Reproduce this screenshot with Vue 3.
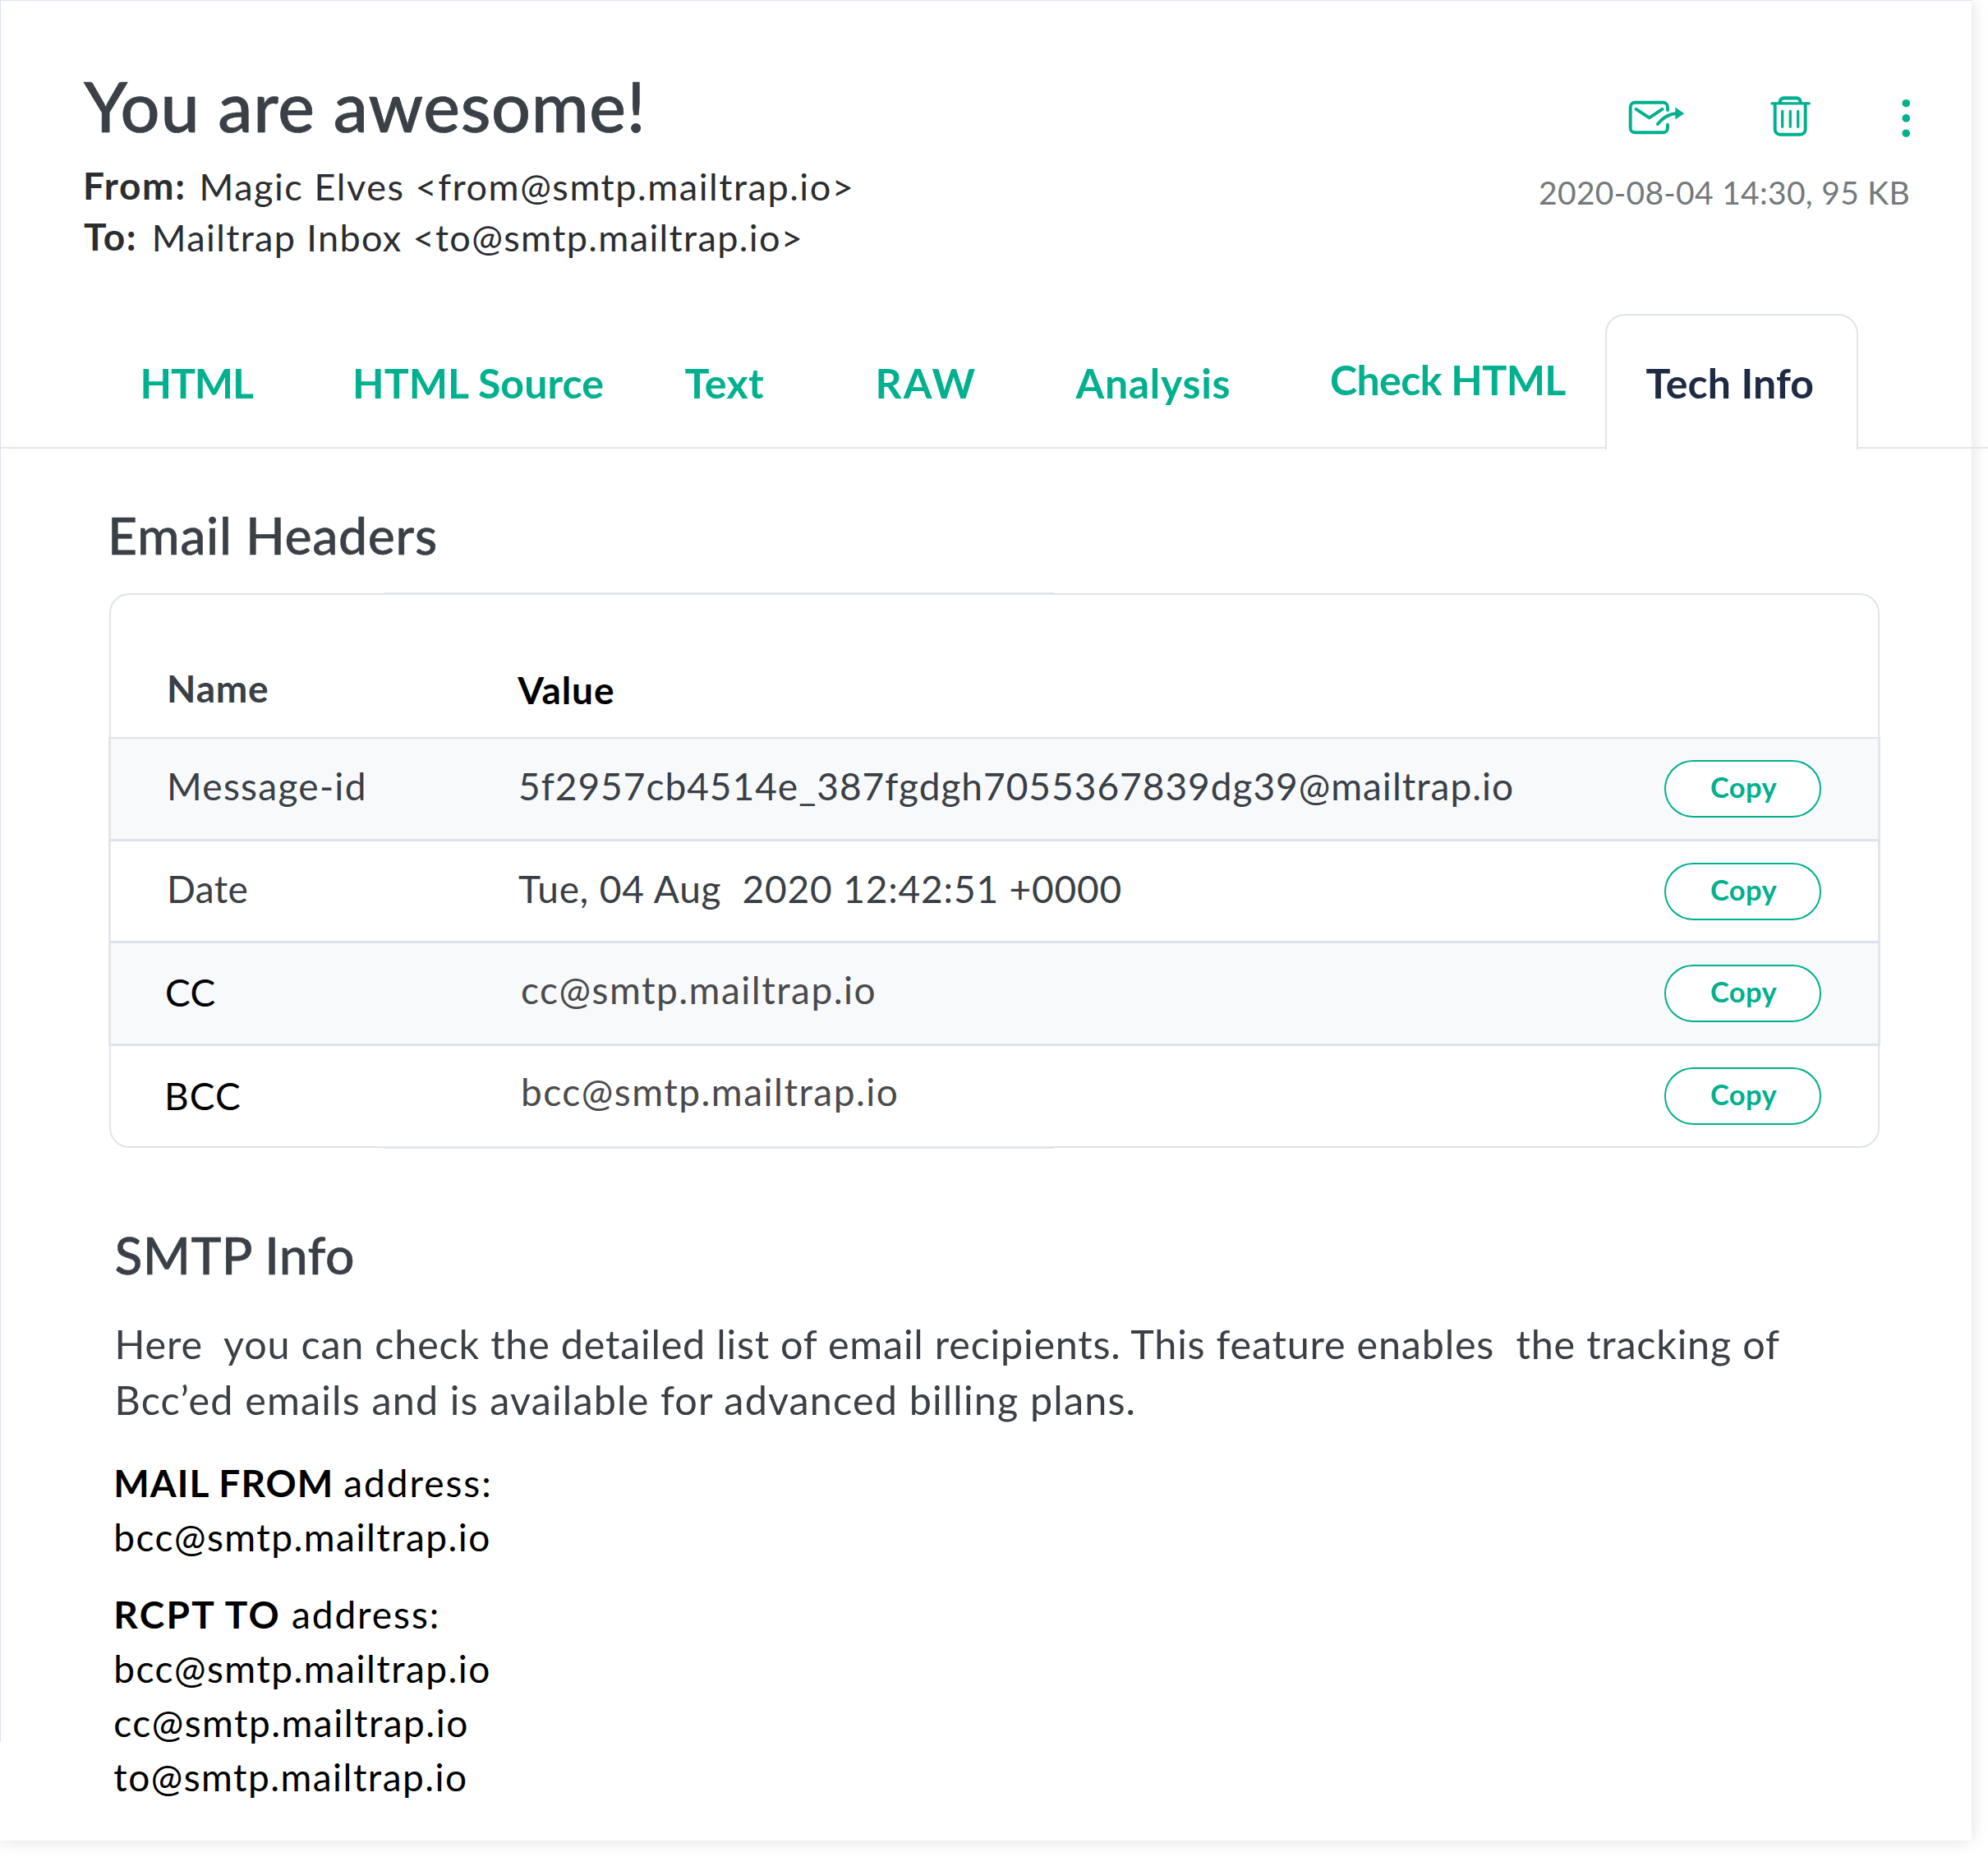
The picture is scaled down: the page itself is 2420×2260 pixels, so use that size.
<script setup>
const tabs = [
  { id: 'html', label: 'HTML' },
  { id: 'source', label: 'HTML Source' },
  { id: 'text', label: 'Text' },
  { id: 'raw', label: 'RAW' },
  { id: 'analysis', label: 'Analysis' },
  { id: 'check', label: 'Check HTML' },
  { id: 'tech', label: 'Tech Info' },
]

const headers = [
  { id: 'message', name: 'Message-id', value: '5f2957cb4514e_387fgdgh7055367839dg39@mailtrap.io' },
  { id: 'date', name: 'Date', value: 'Tue, 04 Aug  2020 12:42:51 +0000' },
  { id: 'cc', name: 'CC', value: 'cc@smtp.mailtrap.io' },
  { id: 'bcc', name: 'BCC', value: 'bcc@smtp.mailtrap.io' },
]

const about = [
  'Here  you can check the detailed list of email recipients. This feature enables  the tracking of',
  'Bcc’ed emails and is available for advanced billing plans.',
]
</script>

<template>
  <div class="page">
    <main class="panel">
      <header class="head">
        <div class="summary">
          <h1>You are awesome!</h1>
          <div class="party from"><b>From:</b><span>Magic Elves &lt;from@smtp.mailtrap.io&gt;</span></div>
          <div class="party to"><b>To:</b><span>Mailtrap Inbox &lt;to@smtp.mailtrap.io&gt;</span></div>
        </div>
        <div class="side">
          <div class="actions">
            <svg class="forward" width="70" height="60" viewBox="0 0 70 60" fill="none" stroke="#00b08e" stroke-width="3.9" stroke-linecap="round" stroke-linejoin="round">
              <path d="M49 24V20.2a5.5 5.5 0 0 0-5.5-5.5H9.2a5.5 5.5 0 0 0-5.5 5.5v25.6a5.5 5.5 0 0 0 5.5 5.5h34.3a5.5 5.5 0 0 0 5.5-5.5V41.6" />
              <path d="M10.7 22.8l16 10.6 15.8-10.6M37 40.9c6-7.5 12-12 22-12.6" />
              <path d="M58.3 20.5L69.2 28.2 58.3 35.5z" fill="#00b08e" stroke="none" />
            </svg>
            <svg class="trash" width="50" height="60" viewBox="0 0 50 60" fill="none" stroke="#00b08e" stroke-width="3.9" stroke-linecap="round" stroke-linejoin="round">
              <path d="M2 15.9h45.4" stroke-width="3.3" />
              <path d="M11.8 15v-1.2a4.4 4.4 0 0 1 4.4-4.4h16a4.4 4.4 0 0 1 4.4 4.4V15" stroke-width="4.2" />
              <path d="M5.7 16.500v31a6.2 6.2 0 0 0 6.2 6.2h24.6a6.2 6.2 0 0 0 6.2-6.2v-31" />
              <path d="M14.7 25.3v19M24.3 25.3v19M33.7 25.3v19" stroke-width="3.3" />
            </svg>
            <svg class="more" width="12" height="60" viewBox="0 0 12 60" fill="#00b08e">
              <circle cx="6.3" cy="15.7" r="4.8" />
              <circle cx="6.3" cy="33.9" r="4.8" />
              <circle cx="6.3" cy="52.2" r="4.8" />
            </svg>
          </div>
          <div class="meta">2020-08-04 14:30, 95 KB</div>
        </div>
      </header>

      <nav class="tabs">
        <a v-for="tab in tabs" :key="tab.id" class="tab" :class="tab.id">{{ tab.label }}</a>
      </nav>

      <section>
        <h2 class="headers-title">Email Headers</h2>
        <div class="table">
          <div class="thead"><span class="name">Name</span><span class="value">Value</span></div>
          <div v-for="row in headers" :key="row.id" class="row" :class="row.id">
            <span class="name">{{ row.name }}</span>
            <span class="value">{{ row.value }}</span>
            <button type="button">Copy</button>
          </div>
        </div>
      </section>

      <section class="smtp">
        <h2>SMTP Info</h2>
        <p class="about"><span v-for="line in about" :key="line">{{ line }}</span></p>
        <div class="addresses mail-from">
          <div><b>MAIL FROM</b><span class="word">address:</span></div>
          <div>bcc@smtp.mailtrap.io</div>
        </div>
        <div class="addresses rcpt-to">
          <div><b>RCPT TO</b><span class="word">address:</span></div>
          <div>bcc@smtp.mailtrap.io</div>
          <div>cc@smtp.mailtrap.io</div>
          <div>to@smtp.mailtrap.io</div>
        </div>
      </section>
    </main>
  </div>
</template>

<style>
body {
  margin: 0;
  background: #fff;
}
</style>

<style scoped>
.page {
  position: relative;
  width: 2420px;
  height: 2260px;
  overflow: hidden;
  font-family: Lato, "Noto Sans", sans-serif;
  font-size: 46px;
  line-height: 62px;
  color: #3a4046;
  white-space: pre;
}
.panel {
  position: relative;
  box-sizing: border-box;
  width: 2400px;
  height: 2240px;
  background: #fff;
  box-shadow: 0 0 20px rgba(0, 0, 0, 0.13);
}
.panel::before {
  content: "";
  position: absolute;
  inset: 0 0 auto 0;
  height: 2119px;
  border-top: 1px solid #dce1ed;
  border-left: 1px solid #dce1ed;
  pointer-events: none;
}
h1, h2, p {
  margin: 0;
  font-weight: 500;
}

/* Header */
.head {
  display: flex;
  justify-content: space-between;
  box-sizing: border-box;
  height: 382px;
  padding: 79px 74px 0 0;
}
h1 {
  margin-left: 102px;
  font-size: 84.5px;
  line-height: 100px;
  letter-spacing: 0.7px;
  -webkit-text-stroke: 0.7px;
}
.party {
  display: flex;
  color: #2b2d31;
}
.from {
  margin: 16px 0 0 101px;
}
.to {
  margin-left: 102px;
}
.party b {
  letter-spacing: 1.67px;
}
.party span {
  padding-top: 2px;
  font-size: 45px;
  line-height: 60px;
}
.from b {
  width: 141.5px;
}
.to b {
  width: 82.8px;
}
.from span {
  letter-spacing: 1.55px;
}
.to span {
  letter-spacing: 1.37px;
}
.side {
  display: flex;
  flex-direction: column;
  align-items: flex-end;
  padding-top: 31px;
}
.actions {
  display: flex;
  height: 60px;
}
.trash {
  margin: 0 109px 0 104px;
}
.meta {
  margin: 39px 1px 0 0;
  font-size: 39px;
  line-height: 50px;
  letter-spacing: 0.29px;
  color: #74797b;
}

/* Tabs */
.tabs {
  display: grid;
  grid-template-columns: 258.5px 404.5px 232px 244px 309.5px 335px 308px;
  box-sizing: border-box;
  width: 2420px;
  height: 164px;
  padding-left: 170.5px;
  border-bottom: 2px solid #e4e5e7;
  font-size: 50px;
  font-weight: 700;
  line-height: 60px;
  color: #00b08e;
}
.tab {
  padding-top: 54px;
}
.html { letter-spacing: -1.09px; }
.source { letter-spacing: 0.1px; }
.text { letter-spacing: 0.33px; }
.raw { letter-spacing: 2.2px; }
.analysis { letter-spacing: 0.7px; }
.check {
  padding-top: 49.5px;
  letter-spacing: -0.6px;
}
.tech {
  box-sizing: border-box;
  height: 165px;
  padding: 52px 0 0 47.5px;
  border: 2px solid #dfe4ea;
  border-bottom: 0;
  border-radius: 24px 24px 0 0;
  background: #fff;
  letter-spacing: 0.15px;
  color: #1f2a44;
}

/* Header table */
h2 {
  font-size: 62.5px;
  line-height: 80px;
  -webkit-text-stroke: 0.5px;
}
.headers-title {
  margin: 65px 0 31px 131px;
  letter-spacing: 0.65px;
}
.table {
  position: relative;
  width: 2157px;
  margin-left: 132px;
}
.table::before,
.table::after {
  content: "";
  position: absolute;
  left: 335px;
  width: 816px;
  height: 1px;
  background: #e3e6ee;
}
.table::before {
  top: -1px;
}
.table::after {
  bottom: -1px;
}
.thead {
  display: flex;
  box-sizing: border-box;
  height: 175px;
  margin: 0 1px;
  padding: 83px 0 0 68px;
  border: 2px solid #dfe4ea;
  border-bottom: 0;
  border-radius: 24px 24px 0 0;
  font-weight: 700;
}
.thead .name {
  width: 427.2px;
  letter-spacing: 0.8px;
}
.thead .value {
  padding-top: 2px;
  letter-spacing: 0.9px;
  color: #000;
}
.row {
  display: flex;
  align-items: flex-start;
  box-sizing: border-box;
  border: solid #e4e6e9;
  border-width: 0 3px 3px;
  border-bottom-color: #dde3ea;
  padding: 26px 0 0 68px;
}
.row .name {
  width: 428px;
  margin-top: 1.4px;
}
.row .value {
  width: 1395px;
  margin-top: 1.4px;
}
.message {
  height: 127px;
  border-top: 2px solid #dfe4ea;
  background: #f8f9fb;
}
.message .name { letter-spacing: 1.3px; }
.message .value { letter-spacing: 0.99px; }
.date {
  height: 124px;
  padding-top: 25.6px;
}
.date .name { letter-spacing: 0.4px; }
.date .value { letter-spacing: 0.83px; }
.cc {
  height: 125px;
  background: #f8f9fb;
}
.cc .name,
.bcc .name {
  box-sizing: border-box;
  margin-left: -2px;
  width: 430px;
  letter-spacing: 0.5px;
  color: #000;
}
.cc .name { padding-top: 2px; }
.cc .value,
.bcc .value {
  box-sizing: border-box;
  padding-left: 3px;
  margin-top: 0;
  letter-spacing: 1.5px;
  color: #4b4b4d;
}
.bcc {
  height: 124px;
  margin: 0 1px;
  padding: 25.6px 0 0 68px;
  border: 2px solid #dfe4ea;
  border-top: 0;
  border-radius: 0 0 24px 24px;
}
.bcc .name {
  margin-left: -3px;
  width: 431px;
  padding-top: 3.5px;
  letter-spacing: 1.04px;
}
.bcc .value {
  margin-top: -0.4px;
}
button {
  box-sizing: border-box;
  width: 191px;
  height: 70px;
  padding: 0 0 4px 54px;
  border: 2px solid #00b08e;
  border-radius: 35px;
  background: #fff;
  font: 700 34.5px/62px Lato, "Noto Sans", sans-serif;
  letter-spacing: 0.4px;
  text-align: left;
  color: #00b08e;
}

/* SMTP info */
.smtp {
  padding: 90px 0 0 139.5px;
}
.smtp h2 {
  letter-spacing: 0.3px;
}
.about {
  margin-top: 34px;
  font-size: 48.5px;
  font-weight: 400;
  line-height: 68.4px;
}
.about span {
  display: block;
  letter-spacing: 0.79px;
}
.about span + span {
  letter-spacing: 1.16px;
}
.addresses {
  margin-left: -1.2px;
  line-height: 66px;
  letter-spacing: 1.46px;
  color: #000;
}
.addresses b {
  display: inline-block;
  width: 280px;
  letter-spacing: 1.05px;
}
.word {
  letter-spacing: 1.93px;
}
.mail-from {
  margin-top: 34.4px;
}
.rcpt-to {
  margin-top: 28px;
}
.rcpt-to b {
  width: 216.6px;
  letter-spacing: 2.3px;
}
</style>
